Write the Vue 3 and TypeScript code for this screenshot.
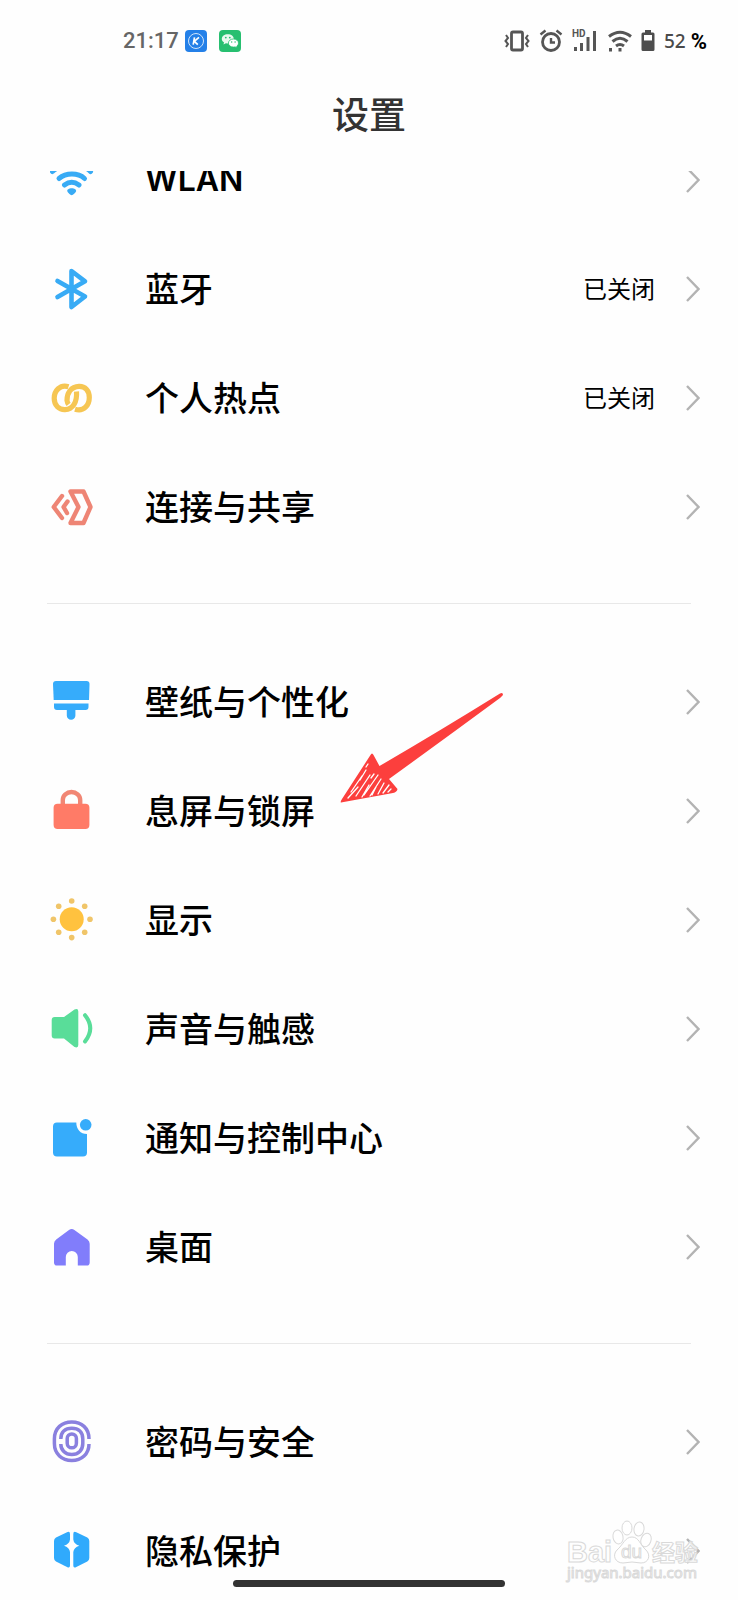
<script setup lang="ts">
interface Item {
  id: string
  label: string
  latin?: boolean
  value?: string
  color: string
  icon: string
}

const groups: Item[][] = [
  [
    {
      id: 'wlan',
      label: 'WLAN',
      latin: true,
      color: '#38abf5',
      icon: `<g fill="none" stroke="currentColor" stroke-width="5" stroke-linecap="round"><path d="M2.500 13.500C13 4 31 4 40.500 13.500"/><path d="M9 20.500C16 14.600 28 14.600 34.500 20.500"/><path d="M14.500 27Q21.700 21.500 29 27"/></g><path d="M21.700 30.200c2.600 0 5 1.400 4.400 3.100-.5 1.300-3.100 3.900-4.400 3.900s-3.900-2.600-4.400-3.900c-.6-1.700 1.800-3.100 4.400-3.100z"/>`,
    },
    {
      id: 'bluetooth',
      label: '蓝牙',
      value: '已关闭',
      color: '#38abf5',
      icon: `<path d="M7.500 14L35 29.500L21.500 40V4L35 14.300L7.500 30" fill="none" stroke="currentColor" stroke-width="4.600" stroke-linecap="round" stroke-linejoin="round"/>`,
    },
    {
      id: 'hotspot',
      label: '个人热点',
      value: '已关闭',
      color: '#f6c653',
      icon: `<g fill="none" stroke="currentColor" stroke-width="5.200"><path d="M18.500 10.800C10 8 4.200 15 4.200 22.300C4.200 29.500 9 33.800 15 33.600C23 33.300 27.300 26 26.500 15.500"/><path d="M25 33.200C34 36 39.300 29 39.300 21.500C39.300 14.500 35 10.200 29 10.400C21 10.700 16.800 17 17 24.500C17.200 26 17.800 27.400 18.600 28.400"/></g>`,
    },
    {
      id: 'sharing',
      label: '连接与共享',
      color: '#ee8575',
      icon: `<g fill="none" stroke="currentColor" stroke-width="4.400" stroke-linejoin="round" stroke-linecap="round"><path d="M20.500 6.500H33.500L40.500 22L33.500 38H20.500L28.500 22Z"/><path d="M12 11L3.700 22L12 33"/><path d="M17.500 16.500L13.500 22L17 28"/></g>`,
    },
  ],
  [
    {
      id: 'wallpaper',
      label: '壁纸与个性化',
      color: '#36acfb',
      icon: `<path d="M6 1H36.500Q39.500 1 39.500 4L39 20H3.700L3 4Q3 1 6 1z"/><path d="M4 23.600H38.500V27Q38.500 30 35.500 30H25.400V35.500a4.300 4.300 0 0 1-8.600 0V30H7Q4 30 4 27z"/>`,
    },
    {
      id: 'lockscreen',
      label: '息屏与锁屏',
      color: '#ff7b67',
      icon: `<path d="M12.800 16V11a8.700 8 0 0 1 17.400 0V16" fill="none" stroke="#f18674" stroke-width="4.400"/><rect x="3.600" y="14.700" width="35.800" height="25.400" rx="4"/>`,
    },
    {
      id: 'display',
      label: '显示',
      color: '#ffc23f',
      icon: `<circle cx="21.700" cy="21.300" r="12"/><g fill="#f0c569"><circle cx="21.700" cy="3" r="2.800"/><circle cx="21.700" cy="39.600" r="2.800"/><circle cx="3.400" cy="21.300" r="2.800"/><circle cx="40" cy="21.300" r="2.800"/><circle cx="8.700" cy="8.300" r="2.800"/><circle cx="34.700" cy="8.300" r="2.800"/><circle cx="8.700" cy="34.300" r="2.800"/><circle cx="34.700" cy="34.300" r="2.800"/></g>`,
    },
    {
      id: 'sound',
      label: '声音与触感',
      color: '#59dd99',
      icon: `<path d="M4.700 10H14L24.500 2.500Q28.300 1 28.300 4.500V38Q28.300 41.500 24.500 40L14 31.500H4.700Q1.700 31.500 1.700 28.500V13Q1.700 10 4.700 10z"/><path d="M35 8.200Q45.500 21 35 34.500" fill="none" stroke="currentColor" stroke-width="4" stroke-linecap="round"/>`,
    },
    {
      id: 'notification',
      label: '通知与控制中心',
      color: '#36acfb',
      icon: `<path d="M7 6.500H26.300C26.200 13 30.500 18.100 37 18.100V36.500Q37 40.500 33 40.500H7Q3 40.500 3 36.500V10.500Q3 6.500 7 6.500z"/><circle cx="35.700" cy="8.800" r="5.800"/>`,
    },
    {
      id: 'home',
      label: '桌面',
      color: '#817dfb',
      icon: `<path d="M19 4.900Q21.700 3.100 24.400 4.900L37.500 14.500Q39.700 16.300 39.700 18.800V37.500Q39.700 40.600 36.800 40.600H27.800V32a6 6 0 0 0-12 0V40.600H7Q4 40.600 4 37.500V18.800Q4 16.300 6.200 14.500z"/>`,
    },
  ],
  [
    {
      id: 'security',
      label: '密码与安全',
      color: '#8a80df',
      icon: `<g fill="none" stroke="currentColor" stroke-width="3.500"><path d="M39 19C39 8 31.500 2 21.800 2S4.400 8 4.400 19V23.500C4.400 34 12 40.500 21.800 40.500S39 34 39 24"/><path d="M10.800 19C10.800 12 15 8.200 21.800 8.200S32.800 12 32.800 19V23.500C32.800 30 28.500 34.500 21.800 34.500S10.800 30 10.800 24"/><rect x="17.200" y="14" width="9.200" height="13.800" rx="4.600"/></g>`,
    },
    {
      id: 'privacy',
      label: '隐私保护',
      color: '#30aafc',
      icon: `<path d="M17 3.300Q20 1.800 20 5V10.500Q19.500 15 14 16.800Q19.500 18.500 20 23V36.500Q20 39.500 17 38L6 32.500Q4 31.400 4 29V12Q4 9.500 6 8.400z"/><path d="M26.300 3.300Q23.300 1.800 23.300 5V10.500Q23.800 15 29.300 16.800Q23.800 18.500 23.300 23V36.500Q23.300 39.500 26.300 38L37.300 32.500Q39.300 31.400 39.300 29V12Q39.300 9.500 37.300 8.400z"/>`,
    },
  ],
]
</script>

<template>
  <div class="screen">
    <header class="top">
      <div class="status">
        <span class="time">21:17</span>
        <svg class="app" viewBox="0 0 22 22" aria-hidden="true">
          <rect width="22" height="22" rx="4" fill="#2480e8" />
          <circle cx="11" cy="11" r="7.500" fill="none" stroke="#cfe4fb" stroke-width="1" />
          <path d="M9.500 7.300L8.200 14.700M14 7.300L9.300 11.300L12.800 14.700" fill="none" stroke="#fff" stroke-width="1.700" />
        </svg>
        <svg class="app" viewBox="0 0 22 22" aria-hidden="true">
          <rect width="22" height="22" rx="4" fill="#27bf70" />
          <path d="M8.800 4.200c3.400 0 6 2.100 6 4.700s-2.600 4.700-6 4.700l-1.900-.3L4.500 14.500l.5-2.200C3.700 11.500 2.800 10.300 2.800 8.900c0-2.600 2.600-4.700 6-4.700z" fill="#e9f9ef" />
          <path d="M14.400 9c2.900 0 5.100 1.800 5.100 4.100 0 1.300-.7 2.300-1.700 3l.3 1.700-1.900-.9-1.800.2c-2.900 0-5-1.800-5-4S11.500 9 14.400 9z" fill="#fff" stroke="#27bf70" stroke-width=".8" />
          <g fill="#27bf70"><circle cx="6.800" cy="7.600" r=".9" /><circle cx="10.800" cy="7.600" r=".9" /><circle cx="12.700" cy="12" r=".7" /><circle cx="16.100" cy="12" r=".7" /></g>
        </svg>
        <div class="indicators">
          <svg width="26" height="24" viewBox="0 0 26 24" fill="none" stroke="#555" aria-hidden="true">
            <rect x="7.500" y="3" width="11" height="18" rx="1.500" stroke-width="2.800" />
            <path d="M2 6l2 3-2.500 3L4 15l-2 3M24 6l-2 3 2.500 3L22 15l2 3" stroke-width="2" />
          </svg>
          <svg class="alarm" width="24" height="24" viewBox="0 0 24 24" fill="none" stroke="#555" aria-hidden="true">
            <circle cx="12" cy="13" r="8.500" stroke-width="2.800" />
            <path d="M12 9v4.500h4M1.500 5.500l5-4M22.500 5.500l-5-4" stroke-width="2.400" />
          </svg>
          <svg class="signal" width="26" height="24" viewBox="0 0 26 24" aria-hidden="true">
            <text x="0" y="8" class="hd">HD</text>
            <path d="M3.500 18v4M9.500 14v8M16 8v14M22.500 2v20" fill="none" stroke="#555" stroke-width="3" />
          </svg>
          <svg class="wifi" width="24" height="24" viewBox="0 0 24 24" fill="none" stroke="#555" aria-hidden="true">
            <path d="M1 7.500Q12-1 23 7.500M4.500 12.500Q12 6 19.500 12.500M8 17Q12 14 16 17" stroke-width="3" />
            <path d="M12 19v3.500M2.500 19v3.500" stroke-width="3" />
          </svg>
          <svg class="battery" width="14" height="22" viewBox="0 0 14 22" aria-hidden="true">
            <path d="M4 0h6v2.500h2q1.500 0 1.500 1.500v15.500q0 1.500-1.500 1.500H2q-1.500 0-1.500-1.500V4Q.5 2.500 2 2.500h2z" fill="#4d4d4d" />
            <path d="M3 5h8v5.500H3z" fill="#fff" />
          </svg>
          <span class="level">52</span>
          <span class="percent">%</span>
        </div>
      </div>
      <h1 class="title">设置</h1>
    </header>

    <main class="list">
      <ul v-for="(group, index) in groups" :key="index" class="group">
        <li v-for="item in group" :key="item.id">
          <button type="button" class="row">
            <svg class="icon" viewBox="0 0 44 44" fill="currentColor" :style="{ color: item.color }" aria-hidden="true" v-html="item.icon"></svg>
            <span class="label" :class="{ latin: item.latin }">{{ item.label }}</span>
            <span v-if="item.value" class="value">{{ item.value }}</span>
            <svg class="chevron" viewBox="0 0 14 26" aria-hidden="true">
              <path d="M1 1L12.500 13L1 25" fill="none" stroke="#b3b3b3" stroke-width="2.400" />
            </svg>
          </button>
        </li>
      </ul>
    </main>

    <svg class="arrow" viewBox="0 0 168 116" aria-hidden="true">
      <path d="M162 3.500Q165 2 165 5L162 8Q105 50 51 89L59.500 99Q59 102 55 103L3 112.500Q2 112 4 109L32.500 65Q34 62 35.500 65L41.500 76Q100 42 162 3.500z" fill="#fc3f3d" />
      <path d="M24 86L13 102M28 80L22 90M32 85L18 106M20 97L10 108M36 84L33 88M40 85L26 105M31 95L24 107M43 89L32 106M38 97L34 105M46 93L40 104M51 95L45 103M53 99L50 102M30 74L28 77" fill="none" stroke="#fff" stroke-width="1.300" stroke-linecap="round" />
    </svg>

    <svg class="watermark" viewBox="0 0 136 66" aria-hidden="true">
      <g fill="#ffffff" fill-opacity=".75" stroke="#d9d9d9" stroke-width="1">
        <text x="0" y="42" class="brand">Bai</text>
        <ellipse cx="51" cy="17" rx="5" ry="7" transform="rotate(-12 51 17)" />
        <ellipse cx="60" cy="8" rx="5" ry="7" />
        <ellipse cx="72" cy="9" rx="5" ry="7" transform="rotate(8 72 9)" />
        <ellipse cx="79" cy="20" rx="5" ry="7" transform="rotate(20 79 20)" />
        <path d="M65 17C58 17 56 25 50 30C45 35 48 43 56 43Q65 41 74 43C82 43 84 35 79 30C73 25 72 17 65 17z" />
        <text x="54" y="38" class="du">du</text>
        <text x="85" y="41" class="brand-cn">经验</text>
        <text x="0" y="58" class="site">jingyan.baidu.com</text>
      </g>
    </svg>
    <div class="home-bar"></div>
  </div>
</template>

<style>
body {
  background: #fefefe;
}
</style>

<style scoped>
.screen {
  position: relative;
  display: flex;
  flex-direction: column;
  height: 100vh;
  overflow: hidden;
  background: #fefefe;
  color: #000;
  font-family: "Noto Sans CJK SC", "Noto Sans", sans-serif;
}

.top {
  flex: none;
  height: 171px;
}

.status {
  display: flex;
  align-items: center;
  height: 81px;
  padding: 0 31px 0 123px;
  font-family: Roboto, "Liberation Sans", sans-serif;
}

.time {
  margin-right: 6px;
  color: #666;
  font-size: 22px;
  font-weight: 500;
}

.app {
  width: 22px;
  height: 22px;
  margin-right: 12px;
}

.indicators {
  display: flex;
  align-items: center;
  margin-left: auto;
}

.alarm {
  margin-left: 9px;
}

.signal {
  margin-left: 9px;
}

.wifi {
  margin-left: 10px;
}

.battery {
  margin-left: 9px;
}

.hd {
  fill: #555;
  font: bold 10px Roboto, sans-serif;
}

.level {
  margin-left: 9px;
  color: #4a4a4a;
  font: 500 19px/24px "Noto Sans", sans-serif;
}

.percent {
  margin-left: 5px;
  padding-top: 2px;
  font: bold 22px/24px Roboto, sans-serif;
}

.title {
  margin: 4px 0 0;
  color: #333;
  font-size: 37px;
  font-weight: 500;
  line-height: 56px;
  text-align: center;
}

.list {
  flex: 1;
  min-height: 0;
  overflow: hidden;
}

.group {
  margin: 0;
  padding: 0;
  list-style: none;
}

.group:first-child {
  margin-top: -46px;
}

.group + .group::before {
  content: "";
  display: block;
  height: 1px;
  margin: 42px 47px 43px;
  background: #e8e8e8;
}

.row {
  display: flex;
  align-items: center;
  width: 100%;
  height: 109px;
  padding: 0 38px 0 50px;
  border: 0;
  background: none;
  color: inherit;
  font-family: inherit;
  text-align: left;
}

.icon {
  flex: none;
  width: 44px;
  height: 44px;
}

.label {
  flex: 1;
  margin-left: 51px;
  padding-bottom: 2px;
  font-size: 34px;
  font-weight: 500;
  line-height: 50px;
}

.latin {
  padding-bottom: 0;
  font-family: Inter, "Noto Sans", sans-serif;
  font-size: 32px;
  font-weight: 600;
}

.value {
  padding-bottom: 2px;
  font-size: 24px;
  line-height: 36px;
}

.chevron {
  flex: none;
  width: 14px;
  height: 26px;
  margin-left: 31px;
}

.arrow {
  position: absolute;
  top: 690px;
  left: 338px;
  width: 168px;
  height: 116px;
}

.watermark {
  position: absolute;
  right: 35px;
  bottom: 14px;
  width: 136px;
  height: 66px;
  overflow: visible;
}

.brand {
  font: bold 29px "Liberation Sans", sans-serif;
}

.du {
  font: 19px "Liberation Sans", sans-serif;
}

.brand-cn {
  font: bold 23px "Noto Sans CJK SC", sans-serif;
}

.site {
  font: 15px "Noto Sans", sans-serif;
}

.home-bar {
  position: absolute;
  bottom: 13px;
  left: 50%;
  width: 272px;
  height: 7px;
  border-radius: 4px;
  background: #333;
  transform: translateX(-50%);
}
</style>
